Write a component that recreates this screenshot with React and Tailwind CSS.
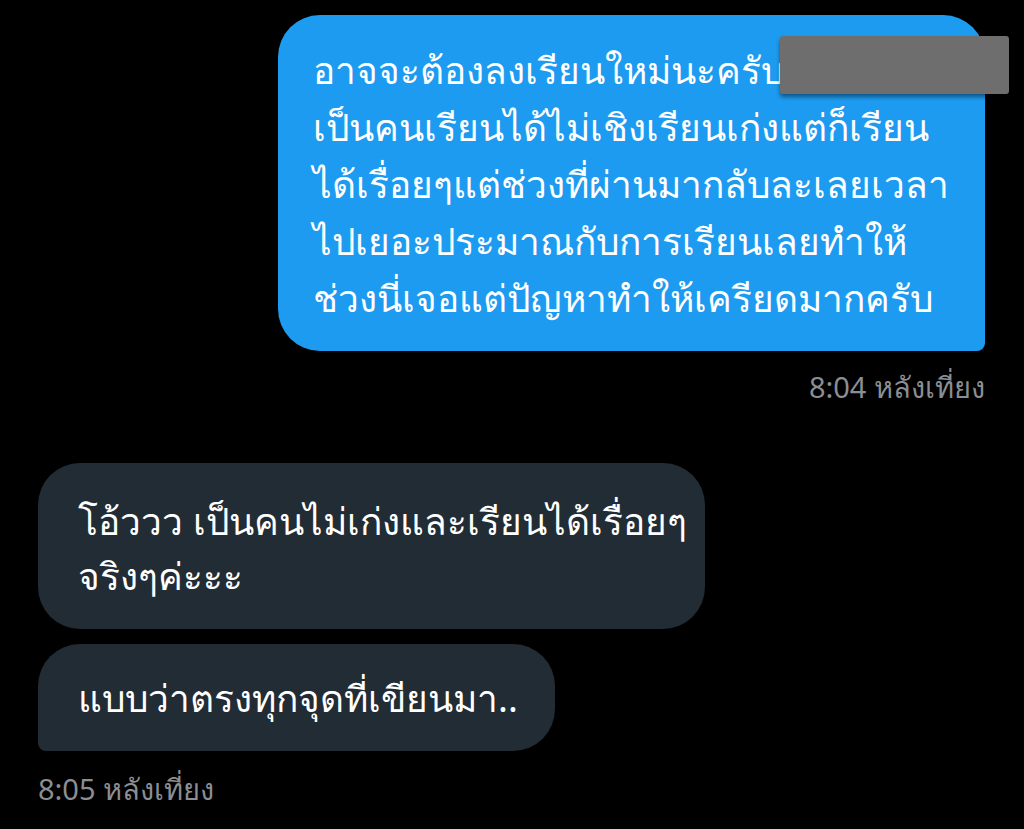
import React from 'react';

const font = { fontFamily: '"Noto Sans", "Liberation Sans", sans-serif' };

const App = () => {
  return (
    <div
      className="relative w-[1024px] h-[829px] bg-black text-white overflow-hidden"
      style={font}
    >
      <div className="flex flex-col pt-[15px] pl-[38px] pr-[39px]">
        {/* ข้อความที่ส่ง */}
        <div className="flex justify-end">
          <div className="w-[707px] bg-[#1d9bf0] rounded-[42px] rounded-br-[8px] pl-[35px] pr-[20px] pt-[26px] pb-[25px] text-[37px] leading-[57px] whitespace-nowrap">
            อาจจะต้องลงเรียนใหม่นะครับ
            <br />
            เป็นคนเรียนได้ไม่เชิงเรียนเก่งแต่ก็เรียน
            <br />
            ได้เรื่อยๆแต่ช่วงที่ผ่านมากลับละเลยเวลา
            <br />
            ไปเยอะประมาณกับการเรียนเลยทำให้
            <br />
            ช่วงนี่เจอแต่ปัญหาทำให้เครียดมากครับ
          </div>
        </div>
        <div className="flex justify-end mt-[20px] text-[29px] leading-[32px] text-[#8b8e92]">
          8:04 หลังเที่ยง
        </div>

        {/* ข้อความที่ได้รับ */}
        <div className="flex flex-col gap-[15px] mt-[60px]">
          <div className="w-[667px] bg-[#222c35] rounded-[42px] pl-[40px] pt-[30px] pb-[26px] text-[37px] leading-[55px] whitespace-nowrap">
            โอ้ววว เป็นคนไม่เก่งและเรียนได้เรื่อยๆ
            <br />
            จริงๆค่ะะะ
          </div>
          <div className="w-[517px] bg-[#222c35] rounded-[42px] rounded-bl-[8px] pl-[40px] pt-[26px] pb-[25px] text-[37px] leading-[56px] whitespace-nowrap">
            แบบว่าตรงทุกจุดที่เขียนมา..
          </div>
        </div>
        <div className="mt-[22px] text-[29px] leading-[32px] text-[#8b8e92]">
          8:05 หลังเที่ยง
        </div>
      </div>

      {/* แถบปิดชื่อ */}
      <div className="absolute left-[780px] top-[36px] w-[229px] h-[58px] bg-[#6e6e6e] rounded-[3px] shadow-[0_3px_4px_rgba(0,0,0,0.45)]" />
    </div>
  );
};

export default App;
